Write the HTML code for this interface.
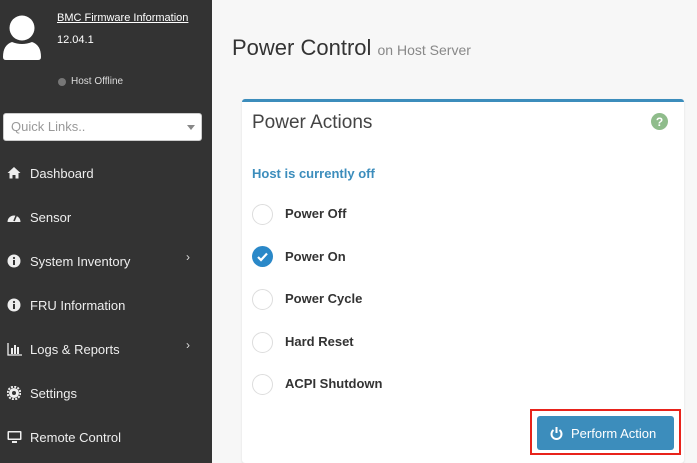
<!DOCTYPE html>
<html><head><style>
*{margin:0;padding:0;box-sizing:border-box}
body{width:697px;height:463px;overflow:hidden;background:#f7f7f7;font-family:"Liberation Sans",sans-serif;position:relative}
.sb{position:absolute;left:0;top:0;width:212px;height:463px;background:#333}
.t{position:absolute;white-space:nowrap}
.nav{position:absolute;left:30px;color:#eee;font-size:13px}
.ic{position:absolute;left:7px;width:14px;height:14px}
.chev{position:absolute;left:186px;color:#ddd;font-size:12px}
.card{position:absolute;left:242px;top:99px;width:442px;height:364px;background:#fff;border-top:3px solid #3c8dbc;border-radius:3px;box-shadow:0 1px 2px rgba(0,0,0,.1)}
.rad{position:absolute;left:252px;width:21px;height:21px;border:1px solid #ddd;border-radius:50%;background:#fff}
.lbl{position:absolute;left:285px;font-size:13px;font-weight:bold;color:#333}
</style></head><body>
<div class="sb">
<svg style="position:absolute;left:2px;top:15px" width="40" height="45" viewBox="0 0 40 45"><circle cx="20" cy="13" r="12.5" fill="#fff"/><path d="M1 42 Q1 30 10 27 Q20 31 30 27 Q39 30 39 42 Q39 45 36 45 L4 45 Q1 45 1 42Z" fill="#fff"/></svg>
<div class="t" style="left:57px;top:12px;color:#fff;font-size:11px;text-decoration:underline">BMC Firmware Information</div>
<div class="t" style="left:57px;top:34px;color:#fff;font-size:11px">12.04.1</div>
<div style="position:absolute;left:58px;top:78px;width:8px;height:8px;border-radius:50%;background:#777"></div>
<div class="t" style="left:71px;top:76px;color:#ddd;font-size:10px">Host Offline</div>
<div style="position:absolute;left:3px;top:113px;width:199px;height:28px;background:#fff;border:1px solid #ccc;border-radius:3px"></div>
<div class="t" style="left:11px;top:119px;color:#999;font-size:13px">Quick Links..</div>
<div style="position:absolute;left:187px;top:125px;border-left:4px solid transparent;border-right:4px solid transparent;border-top:5px solid #888"></div>

<svg class="ic" style="top:166px" viewBox="0 0 14 14"><path d="M7 1 L0.5 7 L2.5 7 L2.5 12.5 L5.5 12.5 L5.5 9 L8.5 9 L8.5 12.5 L11.5 12.5 L11.5 7 L13.5 7Z" fill="#eee"/></svg>
<div class="nav" style="top:166px">Dashboard</div>
<svg class="ic" style="top:210px" viewBox="0 0 14 14"><path d="M0.5 12 A6.5 6.5 0 1 1 13.5 12 Z" fill="#eee"/><path d="M7 11 L9.5 5" stroke="#333" stroke-width="1.6"/></svg>
<div class="nav" style="top:210px">Sensor</div>
<svg class="ic" style="top:254px" viewBox="0 0 14 14"><circle cx="7" cy="7" r="6.5" fill="#eee"/><rect x="6" y="6" width="2" height="5" fill="#333"/><circle cx="7" cy="4" r="1.1" fill="#333"/></svg>
<div class="nav" style="top:254px">System Inventory</div><div class="chev" style="top:250px">›</div>
<svg class="ic" style="top:298px" viewBox="0 0 14 14"><circle cx="7" cy="7" r="6.5" fill="#eee"/><rect x="6" y="6" width="2" height="5" fill="#333"/><circle cx="7" cy="4" r="1.1" fill="#333"/></svg>
<div class="nav" style="top:298px">FRU Information</div>
<svg class="ic" style="top:342px;width:16px" viewBox="0 0 16 14"><path d="M1 1 V13 H15" stroke="#eee" fill="none" stroke-width="1.3"/><rect x="4" y="6" width="2" height="6" fill="#eee"/><rect x="7" y="3" width="2" height="9" fill="#eee"/><rect x="10" y="5" width="2" height="7" fill="#eee"/></svg>
<div class="nav" style="top:342px">Logs &amp; Reports</div><div class="chev" style="top:338px">›</div>
<svg class="ic" style="top:386px" viewBox="0 0 14 14"><circle cx="7" cy="7" r="5" fill="#eee"/><circle cx="7" cy="7" r="6.3" fill="none" stroke="#eee" stroke-width="2" stroke-dasharray="2 1.3"/><circle cx="7" cy="7" r="2" fill="#333"/></svg>
<div class="nav" style="top:386px">Settings</div>
<svg class="ic" style="top:430px;width:15px" viewBox="0 0 15 14"><rect x="0.5" y="1" width="14" height="9" rx="1" fill="#eee"/><rect x="2" y="2.5" width="11" height="6" fill="#333"/><rect x="5" y="11" width="5" height="2" fill="#eee"/></svg>
<div class="nav" style="top:430px">Remote Control</div>
</div>

<div class="t" style="left:232px;top:35px;font-size:22px;color:#333">Power Control <span style="font-size:14px;color:#888">on Host Server</span></div>
<div class="card"></div>
<div class="t" style="left:252px;top:112px;font-size:19px;color:#444">Power Actions</div>
<svg style="position:absolute;left:651px;top:113px" width="17" height="17" viewBox="0 0 17 17"><circle cx="8.5" cy="8.5" r="8.5" fill="#8fbc8b"/><text x="8.5" y="13" font-size="12" font-weight="bold" fill="#fff" text-anchor="middle" font-family="Liberation Sans">?</text></svg>
<div class="t" style="left:252px;top:166px;font-size:13px;font-weight:bold;color:#3c8dbc">Host is currently off</div>
<div class="rad" style="top:204px"></div><div class="lbl" style="top:206px">Power Off</div>
<svg style="position:absolute;left:252px;top:246px" width="21" height="21" viewBox="0 0 21 21"><circle cx="10.5" cy="10.5" r="10.5" fill="#2a88c8"/><path d="M6 11 L9 14 L15 7.5" stroke="#fff" stroke-width="2.2" fill="none"/></svg>
<div class="lbl" style="top:249px">Power On</div>
<div class="rad" style="top:289px"></div><div class="lbl" style="top:291px">Power Cycle</div>
<div class="rad" style="top:332px"></div><div class="lbl" style="top:334px">Hard Reset</div>
<div class="rad" style="top:374px"></div><div class="lbl" style="top:376px">ACPI Shutdown</div>
<div style="position:absolute;left:530px;top:409px;width:151px;height:46px;border:2px solid #e8231b"></div>
<div style="position:absolute;left:537px;top:416px;width:137px;height:34px;background:#3c8dbc;border-radius:3px"></div>
<svg style="position:absolute;left:550px;top:426px" width="13" height="14" viewBox="0 0 13 14"><path d="M3.5 4 A5 5 0 1 0 9.5 4" stroke="#fff" stroke-width="2" fill="none"/><path d="M6.5 1 V7" stroke="#fff" stroke-width="2"/></svg>
<div class="t" style="left:571px;top:426px;font-size:13px;color:#fff">Perform Action</div>
</body></html>
